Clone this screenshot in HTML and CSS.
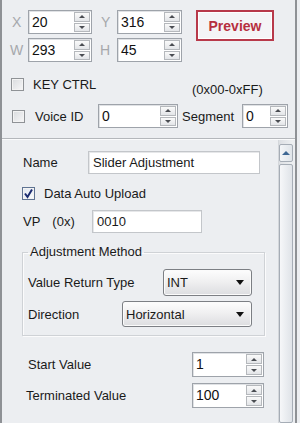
FILE: index.html
```html
<!DOCTYPE html>
<html>
<head>
<meta charset="utf-8">
<link rel="stylesheet" href="styles.css">
</head>
<body>
<div class="panel">
  <section class="top">
    <div class="coord-block">
      <div class="coords">
        <div class="crow">
          <span class="clabel lx">X</span>
          <div class="spin w64"><span class="val">20</span><span class="arrows"><i class="btn"><b class="up"></b></i><i class="btn"><b class="dn"></b></i></span></div>
          <span class="clabel ly">Y</span>
          <div class="spin w65"><span class="val">316</span><span class="arrows"><i class="btn"><b class="up"></b></i><i class="btn"><b class="dn"></b></i></span></div>
        </div>
        <div class="crow">
          <span class="clabel lw">W</span>
          <div class="spin w64"><span class="val">293</span><span class="arrows"><i class="btn"><b class="up"></b></i><i class="btn"><b class="dn"></b></i></span></div>
          <span class="clabel lh">H</span>
          <div class="spin w65"><span class="val">45</span><span class="arrows"><i class="btn"><b class="up"></b></i><i class="btn"><b class="dn"></b></i></span></div>
        </div>
      </div>
      <button class="preview">Preview</button>
    </div>
    <div class="keyrow">
      <label class="keyitem"><span class="cb"></span><span class="cbtext">KEY CTRL</span></label>
      <span class="hex">(0x00-0xFF)</span>
    </div>
    <div class="voicerow">
      <span class="cb cb-voice"></span>
      <span class="voicelabel">Voice ID</span>
      <div class="spin w80"><span class="val">0</span><span class="arrows"><i class="btn"><b class="up"></b></i><i class="btn"><b class="dn"></b></i></span></div>
      <span class="seglabel">Segment</span>
      <div class="spin w46"><span class="val">0</span><span class="arrows"><i class="btn"><b class="up"></b></i><i class="btn"><b class="dn"></b></i></span></div>
    </div>
  </section>
  <section class="lower">
    <div class="content">
      <div class="namerow">
        <span class="namelabel">Name</span>
        <div class="textbox w172">Slider Adjustment</div>
      </div>
      <div class="uploadrow">
        <span class="cb checked"><svg width="13" height="13" viewBox="0 0 13 13"><path d="M3 6.5 L5.5 10 L10 2.5" fill="none" stroke="#1c2c70" stroke-width="2"/></svg></span>
        <span class="cbtext2">Data Auto Upload</span>
      </div>
      <div class="vprow">
        <span class="vplabel"><span>VP</span><span class="ox">(0x)</span></span>
        <div class="textbox w110">0010</div>
      </div>
      <fieldset class="method">
        <legend>Adjustment Method</legend>
        <div class="mrow first">
          <span class="mlabel">Value Return Type</span>
          <div class="select w89"><span>INT</span><b class="caret"></b></div>
        </div>
        <div class="mrow second">
          <span class="mlabel">Direction</span>
          <div class="select w130"><span>Horizontal</span><b class="caret"></b></div>
        </div>
      </fieldset>
      <div class="valrow start">
        <span class="vlabel">Start Value</span>
        <div class="spin w72 tall"><span class="val">1</span><span class="arrows"><i class="btn"><b class="up"></b></i><i class="btn"><b class="dn"></b></i></span></div>
      </div>
      <div class="valrow term">
        <span class="vlabel">Terminated Value</span>
        <div class="spin w72 tall"><span class="val">100</span><span class="arrows"><i class="btn"><b class="up"></b></i><i class="btn"><b class="dn"></b></i></span></div>
      </div>
    </div>
    <div class="scrollbar">
      <div class="sb-up"><b></b></div>
      <div class="sb-thumb"></div>
    </div>
  </section>
</div>
</body>
</html>
```
FILE: styles.css
```css
* { box-sizing: border-box; }
html, body {
  margin: 0;
  padding: 0;
  width: 300px;
  height: 423px;
  overflow: hidden;
  background: #eceef1;
  font-family: "Liberation Sans", Arial, sans-serif;
  font-size: 13px;
  color: #1a1a1a;
}
.panel {
  width: 297px;
  height: 423px;
  border-left: 2px solid #8e9195;
  border-right: 2px solid #8e9195;
  background: #eceef1;
  display: flex;
  flex-direction: column;
}
.top {
  padding-top: 10px;
  padding-bottom: 10px;
  border-bottom: 1px solid #b4b7bb;
  box-shadow: 0 1px 0 #fafbfc;
}
.coord-block { display: flex; align-items: flex-start; }
.coords { display: flex; flex-direction: column; gap: 4px; }
.crow { display: flex; align-items: center; height: 24px; }
.clabel { color: #a6a8ac; font-size: 14px; }
.lx { width: 26px; padding-left: 10px; }
.lw { width: 26px; padding-left: 8px; }
.ly { width: 25px; padding-left: 9px; }
.lh { width: 25px; padding-left: 8px; }

.spin {
  display: flex;
  height: 24px;
  background: #fff;
  border: 1px solid #9ea3aa;
  box-shadow: inset 1px 1px 0 #e0e2e5;
}
.spin.tall { height: 25px; }
.w64 { width: 64px; }
.w65 { width: 65px; }
.w80 { width: 80px; }
.w46 { width: 46px; }
.w72 { width: 72px; }
.val { flex: 1; padding-left: 3px; line-height: 22px; font-size: 14px; color: #111; }
.arrows {
  width: 18px;
  display: flex;
  flex-direction: column;
  gap: 1px;
  padding: 1px 1px 1px 1px;
}
.btn {
  flex: 1;
  border: 1px solid #b5b8bc;
  background: linear-gradient(#fafafa, #e3e5e8);
  display: flex;
  align-items: center;
  justify-content: center;
}
.up, .dn { width: 0; height: 0; border-left: 3px solid transparent; border-right: 3px solid transparent; }
.up { border-bottom: 3px solid #4a4d52; }
.dn { border-top: 3px solid #4a4d52; }

.preview {
  margin-left: 14px;
  width: 78px;
  height: 31px;
  border: 2px solid #b8394a;
  background: #f4f4f6;
  color: #b62f40;
  font-family: "Liberation Sans", Arial, sans-serif;
  font-weight: bold;
  font-size: 14px;
  padding: 0;
  box-shadow: inset 0 0 0 1px #fff;
}

.cb {
  width: 13px;
  height: 13px;
  flex: none;
  border: 1px solid #8f9296;
  background: linear-gradient(135deg, #d9dbde, #f7f7f8);
  box-shadow: inset 0 0 0 1px #f3f3f3;
  display: block;
}
.cb.checked {
  border-color: #5f7392;
  background: linear-gradient(135deg, #dfe6f0, #fbfcfd);
}
.cb svg { display: block; margin: -1px; }

.keyrow { display: flex; height: 20px; margin-top: 15px; }
.keyitem { align-self: flex-start; display: flex; align-items: center; height: 15px; width: 190px; padding-left: 9px; }
.cbtext { margin-left: 9px; }
.hex { align-self: flex-end; line-height: 15px; }

.voicerow { display: flex; align-items: center; height: 24px; margin-top: 7px; }
.cb-voice { margin-left: 10px; }
.voicelabel { width: 73px; padding-left: 10px; }
.seglabel { width: 64px; padding-left: 4px; }

.lower { flex: 1; display: flex; min-height: 0; margin-top: 1px; }
.content { width: 276px; padding-top: 11px; }
.namerow { display: flex; align-items: center; height: 23px; }
.namelabel { width: 86px; padding-left: 21px; }
.textbox {
  height: 23px;
  background: #fff;
  border: 1px solid #c3c6ca;
  box-shadow: inset 1px 1px 0 #e6e7e9;
  padding-left: 4px;
  line-height: 21px;
  font-size: 13px;
}
.w172 { width: 172px; }
.w110 { width: 110px; }

.uploadrow { display: flex; align-items: center; height: 15px; margin-top: 12px; padding-left: 20px; }
.cbtext2 { margin-left: 9px; }

.vprow { display: flex; align-items: center; height: 23px; margin-top: 9px; }
.vplabel { width: 90px; padding-left: 21px; display: flex; }
.ox { margin-left: 12px; }

.method {
  margin: 11px 0 0 20px;
  width: 243px;
  padding: 0 0 8px 0;
  border: 1px solid #cfd2d6;
  box-shadow: 1px 1px 0 #fbfbfc, inset 1px 1px 0 #fbfbfc;
  min-width: 0;
}
.method legend {
  margin-left: 5px;
  padding: 0 2px;
  line-height: 16px;
  font-size: 13px;
}
.mrow { display: flex; align-items: center; }
.mrow.first { height: 27px; margin-top: 9px; }
.mrow.second { height: 26px; margin-top: 5px; }
.mlabel { padding-left: 5px; }
.select {
  margin-left: auto;
  margin-right: 12px;
  height: 100%;
  display: flex;
  align-items: center;
  justify-content: space-between;
  border: 1px solid #7c7f84;
  border-radius: 3px;
  background: linear-gradient(#fdfdfd, #f0f0f1 45%, #dcdde0);
  padding: 0 7px 0 3px;
  box-shadow: inset 0 0 0 1px #fbfbfb;
}
.w89 { width: 89px; }
.w130 { width: 130px; }
.caret { width: 0; height: 0; border-left: 4px solid transparent; border-right: 4px solid transparent; border-top: 5px solid #111; }

.valrow { display: flex; align-items: center; padding-right: 14px; }
.valrow.start { margin-top: 16px; }
.valrow.term { margin-top: 6px; }
.vlabel { flex: 1; }
.start .vlabel { padding-left: 26px; }
.term .vlabel { padding-left: 24px; }

.scrollbar {
  width: 15px;
  padding-top: 4px;
  display: flex;
  flex-direction: column;
  gap: 2px;
  background: linear-gradient(90deg, #dcdfe3, #eef0f2);
  border-left: 1px solid #d4d7db;
}
.sb-up {
  height: 18px;
  border: 1px solid #a6adb6;
  border-radius: 2px;
  background: linear-gradient(90deg, #f4f6f8, #dfe4e9);
  display: flex;
  align-items: center;
  justify-content: center;
}
.sb-up b { width: 0; height: 0; border-left: 4px solid transparent; border-right: 4px solid transparent; border-bottom: 4px solid #3d6793; }
.sb-thumb {
  flex: 1;
  border: 1px solid #a6adb6;
  border-radius: 2px;
  background: linear-gradient(90deg, #f6f7f9, #dfe3e8);
}
```
